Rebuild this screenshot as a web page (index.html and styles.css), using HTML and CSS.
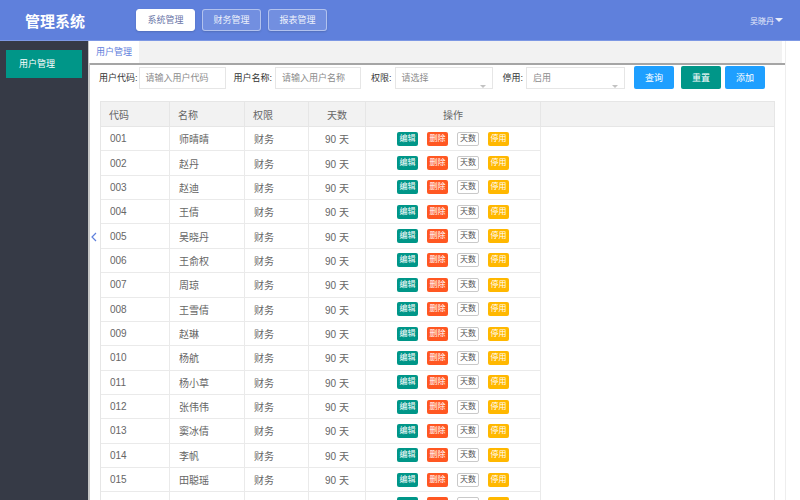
FILE: index.html
```html
<!DOCTYPE html>
<html lang="zh-CN">
<head>
    <meta charset="UTF-8">
    <title>管理系统</title>
    <link rel="stylesheet" href="styles.css">
</head>
<body>
    <div class="header">
        <div class="logo">管理系统</div>
        <div class="nav">
            <a class="nav-btn active">系统管理</a>
            <a class="nav-btn">财务管理</a>
            <a class="nav-btn">报表管理</a>
        </div>
        <div class="user">吴晓丹 <span class="caret"></span></div>
    </div>

    <div class="layout">
        <div class="side">
            <div class="side-item">用户管理</div>
        </div>

        <div class="main">
            <span class="fold">
                <svg width="6" height="10" viewBox="0 0 6 10"><path d="M5 1 L1 5 L5 9" fill="none" stroke="#5f80dc" stroke-width="1.2"/></svg>
            </span>
            <div class="tabs">
                <div class="tabs-bar">
                    <div class="tab">用户管理</div>
                </div>
            </div>

            <div class="search">
                <label class="first">用户代码:</label>
                <div class="input w87 ph">请输入用户代码</div>
                <label class="ml8">用户名称:</label>
                <div class="input w86 ph">请输入用户名称</div>
                <label class="ml10">权限:</label>
                <div class="input select w98 ph">请选择</div>
                <label class="ml10">停用:</label>
                <div class="input select w99 ph">启用</div>
                <button class="btn blue ml9">查询</button>
                <button class="btn teal ml7">重置</button>
                <button class="btn blue ml4">添加</button>
            </div>

            <div class="grid">
                <table>
                    <thead>
                        <tr>
                            <th class="c1">代码</th>
                            <th class="c2">名称</th>
                            <th class="c3">权限</th>
                            <th class="c4 center">天数</th>
                            <th class="c5 center">操作</th>
                            <th class="c6"></th>
                        </tr>
                    </thead>
                    <tbody id="rows"></tbody>
                </table>
            </div>
        </div>
    </div>

    <script>
        var names = ['师晴晴', '赵丹', '赵迪', '王倩', '吴晓丹', '王俞权', '周琼', '王雪倩', '赵琳', '杨航', '杨小草', '张伟伟', '窦冰倩', '李帆', '田聪瑶'];
        var html = '';
        for (var i = 0; i < names.length; i++) {
            var code = ('00' + (i + 1)).slice(-3);
            html += '<tr>' +
                '<td>' + code + '</td>' +
                '<td>' + names[i] + '</td>' +
                '<td>财务</td>' +
                '<td class="center">90 天</td>' +
                '<td class="center ops">' +
                    '<span class="tag t-edit">编辑</span>' +
                    '<span class="tag t-del">删除</span>' +
                    '<span class="tag t-day">天数</span>' +
                    '<span class="tag t-stop">停用</span>' +
                '</td>' +
                '<td class="blank"></td>' +
                '</tr>';
        }
        // next row only peeks in at the bottom edge
        html += '<tr><td></td><td></td><td></td><td></td>' +
            '<td class="center ops">' +
                '<span class="tag t-edit"></span>' +
                '<span class="tag t-del"></span>' +
                '<span class="tag t-day"></span>' +
                '<span class="tag t-stop"></span>' +
            '</td><td class="blank"></td></tr>';
        document.getElementById('rows').innerHTML = html;
    </script>
</body>
</html>
```

FILE: styles.css
```css
* {
    box-sizing: border-box;
}
body {
    margin: 0;
    height: 500px;
    overflow: hidden;
    background: #fff;
    font-family: "Liberation Sans", "Noto Sans CJK SC", sans-serif;
    font-size: 10px;
    color: #666;
}
.header {
    height: 41px;
    background: #5f80dc;
    border-bottom: 1px solid #7d98e4;
    display: flex;
    align-items: center;
    padding-left: 25px;
}
.logo {
    color: #fff;
    font-size: 15px;
    font-weight: bold;
    width: 111px;
    font-family: "Noto Sans CJK SC", sans-serif;
}
.nav {
    display: flex;
    gap: 7px;
}
.nav-btn {
    width: 59px;
    height: 22px;
    line-height: 20px;
    text-align: center;
    font-size: 9px;
    color: #eef1fb;
    border: 1px solid rgba(255,255,255,0.45);
    background: rgba(255,255,255,0.12);
    border-radius: 3px;
    box-shadow: 0 1px 2px rgba(0,0,0,0.15);
}
.nav-btn.active {
    background: #fff;
    color: #6a76a8;
    border-color: #fff;
}
.user {
    margin-left: auto;
    margin-right: 17px;
    color: #e8edfa;
    font-size: 8px;
    display: flex;
    align-items: center;
    gap: 1px;
}
.caret {
    width: 0;
    height: 0;
    border-left: 4px solid transparent;
    border-right: 4px solid transparent;
    border-top: 4px solid #e8edfa;
}
.layout {
    display: flex;
    height: 459px;
}
.side {
    width: 88px;
    background: #363a46;
    padding: 9px 6px;
}
.side-item {
    height: 28px;
    line-height: 28px;
    background: #009688;
    color: #fff;
    font-size: 9px;
    padding-left: 13px;
}
.main {
    position: relative;
    width: 698px;
    border-left: 2px solid #c6c6c6;
    border-right: 1px solid #eee;
}
.fold {
    position: absolute;
    left: 1px;
    top: 191px;
}
.tabs {
    border-bottom: 2px solid #a5a5a5;
}
.tabs-bar {
    height: 22px;
    margin-right: 3px;
    background: #f2f2f2;
}
.tab {
    width: 50px;
    height: 22px;
    line-height: 22px;
    background: #fff;
    color: #5f80dc;
    font-size: 9px;
    padding-left: 7px;
    margin-left: -1px;
}
.search {
    display: flex;
    align-items: center;
    height: 23px;
    margin-top: 1px;
    padding-left: 9px;
}
.search label {
    font-size: 9px;
    color: #333;
    margin-right: 3px;
}
.search label.first {
    margin-right: 1px;
}
.input {
    position: relative;
    height: 22px;
    line-height: 20px;
    border: 1px solid #e6e6e6;
    padding-left: 6px;
    font-size: 9px;
    color: #555;
    background: #fff;
}
.input.ph {
    color: #8c8c8c;
}
.select::after {
    content: "";
    position: absolute;
    right: 6px;
    bottom: 0;
    border-left: 3px solid transparent;
    border-right: 3px solid transparent;
    border-top: 3px solid #c2c2c2;
}
.w86 { width: 86px; }
.w87 { width: 87px; }
.w98 { width: 98px; }
.w99 { width: 99px; }
.ml4 { margin-left: 4px; }
.ml7 { margin-left: 7px; }
.ml8 { margin-left: 8px; }
.ml9 { margin-left: 9px; }
.ml10 { margin-left: 10px; }
.btn {
    width: 40px;
    height: 23px;
    border: none;
    border-radius: 2px;
    color: #fff;
    font-size: 9px;
    font-family: inherit;
    padding: 0;
}
.btn.blue {
    background: #1e9fff;
}
.btn.teal {
    background: #009688;
}
.grid {
    margin: 12px 0 0 10px;
    width: 675px;
    border: 1px solid #e6e6e6;
    border-bottom: none;
}
table {
    width: 100%;
    border-collapse: separate;
    border-spacing: 0;
    table-layout: fixed;
}
th {
    height: 25px;
    background: #f2f2f2;
    font-weight: normal;
    text-align: left;
    padding: 0 0 0 8px;
    border-right: 1px solid #e6e6e6;
    border-bottom: 1px solid #e6e6e6;
}
th.c6 {
    border-right: none;
}
.c1 { width: 69px; }
.c2 { width: 75px; }
.c3 { width: 64px; }
.c4 { width: 57px; }
.c5 { width: 175px; }
td {
    height: 24.36px;
    padding: 0 0 0 9px;
    border-right: 1px solid #eaeaea;
    border-bottom: 1px solid #eaeaea;
    white-space: nowrap;
}
td.blank {
    border: none;
}
.center {
    text-align: center;
    padding-left: 0;
}
th.center {
    padding-left: 0;
}
.ops {
    font-size: 0;
}
.tag {
    display: inline-block;
    width: 21px;
    height: 14px;
    line-height: 12px;
    margin: 0 4.5px;
    font-size: 8px;
    color: #fff;
    border: 1px solid transparent;
    border-radius: 2px;
    vertical-align: middle;
}
.t-edit {
    background: #009688;
}
.t-del {
    background: #ff5722;
}
.t-day {
    background: #fff;
    color: #555;
    border-color: #c9c9c9;
    width: 22px;
}
.t-stop {
    background: #ffb800;
}
```
